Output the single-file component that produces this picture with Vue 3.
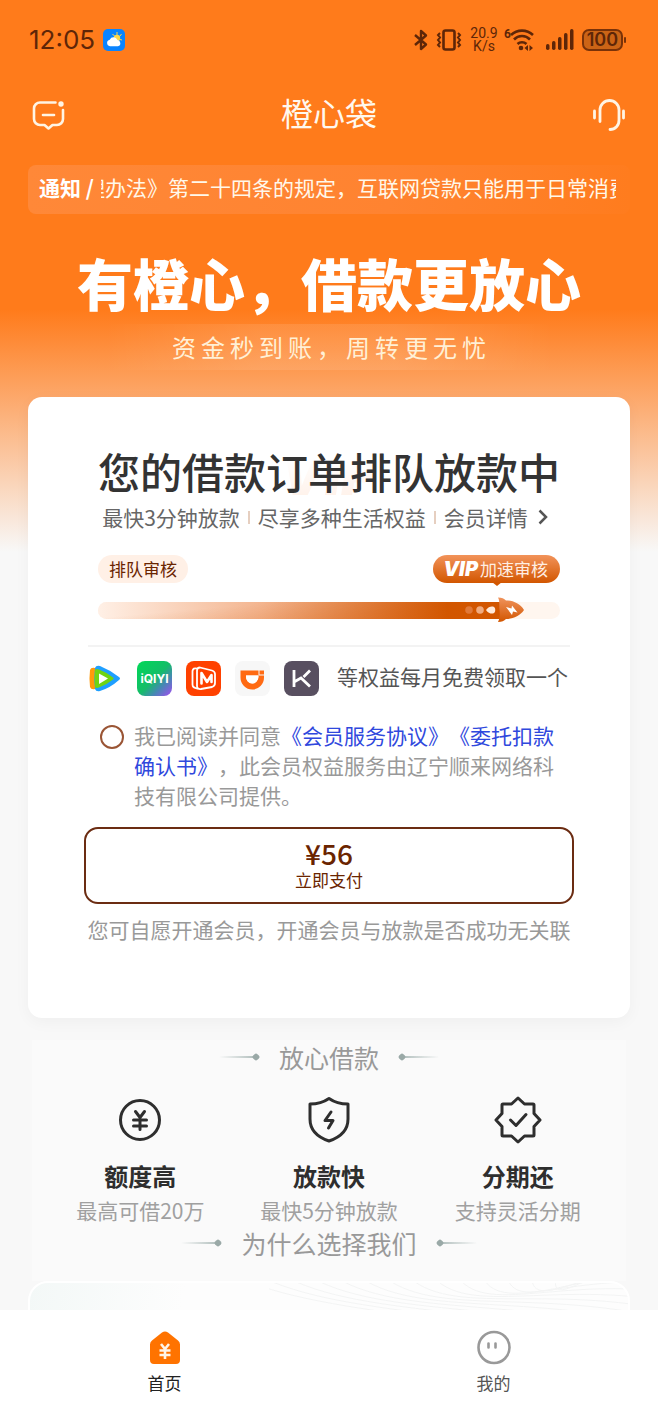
<script setup>
import { ref } from 'vue'

const agreed = ref(false)

const features = [
  { icon: 'yen', title: '额度高', text: '最高可借20万' },
  { icon: 'shield', title: '放款快', text: '最快5分钟放款' },
  { icon: 'badge', title: '分期还', text: '支持灵活分期' }
]

const bars = [6, 9, 13, 17, 21]
const waves = Array.from({ length: 14 }, (_, i) => i * 9)
</script>

<template>
  <div class="page">
    <main class="scroll">
      <div class="status">
        <div class="status-group">
          <span class="clock">12:05</span>
          <svg class="weather" width="22" height="22" viewBox="0 0 22 22" aria-hidden="true">
            <rect width="22" height="22" rx="5" fill="#0a84ff" />
            <path d="M14 3v3M18.500 5l-1.500 2M9.500 5l2 2M17 10.500l2 .5" stroke="#ffd94a" stroke-width="1" />
            <circle cx="14" cy="9" r="3.200" fill="#ffd94a" />
            <path d="M7 17.200a3.300 3.300 0 0 1-.3-6.500 4.200 4.200 0 0 1 7.700 .4 3.100 3.100 0 0 1 .6 6.100z" fill="#fff" />
          </svg>
        </div>
        <div class="status-group">
          <svg width="14" height="22" viewBox="0 0 14 22" fill="none" stroke="#5e2608" stroke-width="2.400" stroke-linejoin="round" aria-hidden="true">
            <path d="M1 6l11 9.500-5 4.500V2l5 4.500L1 16" />
          </svg>
          <svg width="26" height="22" viewBox="0 0 26 22" fill="none" stroke="#5e2608" aria-hidden="true">
            <rect x="7.500" y="1.500" width="11" height="19" rx="2" stroke-width="2.600" />
            <path d="M4 4L2 6l2 2.500-2 2.500 2 2.500L2 16l2 2M22 4l2 2-2 2.500 2 2.500-2 2.500 2 2.500-2 2" stroke-width="2" />
          </svg>
          <span class="speed">20.9<br />K/s</span>
          <svg class="wifi" width="31" height="24" viewBox="0 0 31 24" aria-hidden="true">
            <text x="0" y="10" class="wifi-num">6</text>
            <g fill="none" stroke="#5e2608" stroke-width="2.600">
              <path d="M7 7a16 16 0 0 1 22 0" />
              <path d="M10 11.500a11 11 0 0 1 16 0" />
              <path d="M13.500 16a6.500 6.500 0 0 1 9 0" />
            </g>
            <circle cx="17" cy="20" r="2.300" fill="#5e2608" />
            <path d="M24 17v6l-3.500-3zM25.500 17v6l3.500-3z" fill="#5e2608" />
          </svg>
          <svg class="signal" width="28" height="22" viewBox="0 0 28 22" aria-hidden="true">
            <rect v-for="(h, i) in bars" :key="h" :x="i * 6" :y="21 - h" width="3.500" :height="h" rx="1.700" fill="#5e2608" />
          </svg>
          <span class="battery">100</span>
        </div>
      </div>

      <header class="nav">
        <button class="icon-btn" type="button" aria-label="消息">
          <svg width="34" height="32" viewBox="0 0 34 32" fill="none" stroke="#fff4e4" stroke-width="2.600" stroke-linecap="round" stroke-linejoin="round">
            <path d="M23.500 3.500H8a6 6 0 0 0-6 6v10.500a6 6 0 0 0 6 6h4.500l4 3.500 4-3.500H25a6 6 0 0 0 6-6V11" />
            <path d="M11 16h11" />
            <circle cx="29" cy="5" r="1.700" fill="#fff4e4" stroke-width="2" />
          </svg>
        </button>
        <h1 class="nav-title">橙心袋</h1>
        <button class="icon-btn" type="button" aria-label="客服">
          <svg width="34" height="34" viewBox="0 0 34 34" fill="none" stroke="#fff4e4" stroke-width="2.800" stroke-linecap="round">
            <path d="M8 23.500V12a9.500 9.500 0 0 1 19 0v10a9 9 0 0 1-9 9.500" />
            <path d="M2.500 13v7M31.500 13v7" />
          </svg>
        </button>
      </header>

      <div class="notice">
        <strong class="notice-label">通知 /</strong>
        <div class="notice-view">
          <span class="notice-text">理办法》第二十四条的规定，互联网贷款只能用于日常消费</span>
        </div>
      </div>

      <h2 class="slogan">有橙心，借款更放心</h2>
      <p class="tagline">资金秒到账，周转更无忧</p>

      <section class="card">
        <div class="card-head">
          <span class="watermark" aria-hidden="true">VIP</span>
          <h2 class="card-title">您的借款订单排队放款中</h2>
        </div>
        <div class="perks">
          <span>最快3分钟放款</span>
          <i class="bar"></i>
          <span>尽享多种生活权益</span>
          <i class="bar"></i>
          <a class="detail" href="#member">会员详情
            <svg width="10" height="16" viewBox="0 0 10 16" fill="none" stroke="#555" stroke-width="2.500"><path d="M1.500 1.500L8 8l-6.500 6.500" /></svg>
          </a>
        </div>

        <div class="queue">
          <div class="queue-labels">
            <span class="tag">排队审核</span>
            <span class="vip-tag"><b class="vip">VIP</b>加速审核</span>
          </div>
          <div class="track">
            <div class="fill"></div>
            <svg class="rocket" width="60" height="26" viewBox="0 0 60 26" aria-hidden="true">
              <defs>
                <linearGradient id="rocketBody" x1="0" y1="0" x2="0" y2="1">
                  <stop offset="0" stop-color="#f0935c" />
                  <stop offset="1" stop-color="#d25600" />
                </linearGradient>
              </defs>
              <circle cx="4" cy="13" r="3.800" fill="#e0793a" />
              <circle cx="15" cy="13" r="3.800" fill="#f0ab80" />
              <path d="M21 13c2-3 5-4 7-3.500 3 .8 3 6.200 0 7-2 .5-5-.5-7-3.500z" fill="#ffeadb" />
              <path d="M33 .5c4 0 6 1 8 3 7 0 14 3 18 9.500-4 6-11 9-18 9-2 2-4 3-8 3 2-4 2-8 1.500-12S35 4 33 .5z" fill="url(#rocketBody)" />
              <path d="M41 10l5.500 1.500.5-3 5.500 7-4.500-1-1 3.500z" fill="#fff" />
            </svg>
          </div>
        </div>

        <div class="benefits">
          <svg class="app" viewBox="0 0 35 35" aria-label="腾讯视频" role="img">
            <path d="M2 9q1-3 5-2l3 2v17l-3 2q-4 1-5-2-1-8.500 0-17z" fill="#ff9a0a" />
            <path d="M7 7q1-3 5-2 10 4 19 11 2 1.500 0 3-9 8-19 11-4 1-5-2-1.500-10 0-21z" fill="#1f9fff" />
            <path d="M7 9q1-1.500 4-.5 8 3 14 8 1.500 1 0 2-6 5-14 8-3 1-4-.5-1-8.500 0-17z" fill="#6fd413" />
            <path d="M11 12.500l9 5-9 5.500z" fill="#fff" />
          </svg>
          <svg class="app" viewBox="0 0 35 35" aria-label="爱奇艺" role="img">
            <defs>
              <linearGradient id="qiyi" x1="0" y1="0" x2="1" y2="1">
                <stop offset="0" stop-color="#00d957" />
                <stop offset=".5" stop-color="#14bd68" />
                <stop offset=".72" stop-color="#4787b5" />
                <stop offset="1" stop-color="#a34bf2" />
              </linearGradient>
            </defs>
            <rect width="35" height="35" rx="8" fill="url(#qiyi)" />
            <text x="17.500" y="22" text-anchor="middle" class="qiyi-text">iQIYI</text>
          </svg>
          <svg class="app" viewBox="0 0 35 35" aria-label="芒果TV" role="img">
            <rect width="35" height="35" rx="8" fill="#ff4100" />
            <g fill="none" stroke="#fff" stroke-linejoin="round" stroke-linecap="round">
              <path d="M11 7.500Q7 6.500 6.500 10v13.500q0 3.500 5 4" stroke-width="1.800" />
              <path d="M14 6.500l12 3q3 1 3 3.500v9q0 3-3 4l-11 2q-4 .5-4-3V9.500q0-3 3-3z" stroke-width="1.800" />
              <path d="M15.500 22.500V12l5.500 9 4.500-7v7" stroke-width="2.600" />
            </g>
          </svg>
          <svg class="app" viewBox="0 0 35 35" aria-label="滴滴出行" role="img">
            <rect width="35" height="35" rx="8" fill="#f7f7f7" />
            <path d="M5.500 9.500h18v5H11V16a6.200 6.500 0 0 0 12.400 0v-1.500H29v2a11.700 12 0 0 1-23.500 0z" fill="#ff6a13" />
            <path d="M24.500 9.500H29v4h-4.500z" fill="#ff6a13" />
            <path d="M11 14.500h12.400V16a6.200 6.500 0 0 1-12.400 0z" fill="#fff" />
          </svg>
          <svg class="app" viewBox="0 0 35 35" aria-label="Keep" role="img">
            <rect width="35" height="35" rx="8" fill="#584f60" />
            <path d="M10 9v17M26 9.500L19.500 16M10 21l7-4 9 8.500" fill="none" stroke="#fff" stroke-width="2.800" />
          </svg>
          <span class="benefits-text">等权益每月免费领取一个</span>
        </div>

        <div class="agree">
          <input id="agree" v-model="agreed" class="agree-box" type="checkbox" />
          <p class="agree-text"><label for="agree">我已阅读并同意</label><a href="#service">《会员服务协议》</a><a href="#debit">《委托扣款确认书》</a>，此会员权益服务由辽宁顺来网络科技有限公司提供。</p>
        </div>

        <button class="pay" type="button">
          <span class="price">¥56</span>
          <span class="pay-text">立即支付</span>
        </button>
        <p class="note">您可自愿开通会员，开通会员与放款是否成功无关联</p>
      </section>

      <section class="why">
        <h3 class="heading"><i class="deco"></i>放心借款<i class="deco flip"></i></h3>
        <ul class="features">
          <li v-for="f in features" :key="f.title" class="feature">
            <svg width="48" height="48" viewBox="0 0 48 48" fill="none" stroke="#2e2e2e" stroke-width="3" stroke-linecap="round" stroke-linejoin="round" aria-hidden="true">
              <g v-if="f.icon === 'yen'">
                <circle cx="24" cy="24" r="19.500" />
                <path d="M19.500 15.500l4.500 6 4.500-6M24 21.500v12M17.500 24h13M17.500 30h13" />
              </g>
              <g v-else-if="f.icon === 'shield'">
                <path d="M24 2.500c5 3.500 11 5.500 19 5.500v15c0 11-7 18-19 22C12 41 5 34 5 23V8c8 0 14-2 19-5.500z" />
                <path d="M26 16l-6 8.500h8L23.500 32" />
              </g>
              <g v-else>
                <path d="M24 2l6.500 6H39q1 0 1 1v8.500l6 6.500-6 6.500V39q0 1-1 1h-8.500L24 46l-6.500-6H9q-1 0-1-1v-8.500L2 24l6-6.500V9q0-1 1-1h8.500z" />
                <path d="M16.500 24l5.500 5.500 10-11" />
              </g>
            </svg>
            <strong class="feature-title">{{ f.title }}</strong>
            <span class="feature-text">{{ f.text }}</span>
          </li>
        </ul>
        <h3 class="heading"><i class="deco"></i>为什么选择我们<i class="deco flip"></i></h3>
      </section>

      <section class="promo">
        <svg class="promo-lines" viewBox="0 0 360 120" fill="none" stroke="#f3f4f4" stroke-width="1" aria-hidden="true">
          <path v-for="w in waves" :key="w" :d="`M${w * 3 - 60} -20C${w * 2 + 40} 40 ${w + 200} ${20 - w / 3} 400 ${90 - w}`" />
        </svg>
      </section>
    </main>

    <nav class="tabs">
      <a class="tab active" href="#home">
        <svg width="34" height="36" viewBox="0 0 34 36" aria-hidden="true">
          <path d="M14 2.500q3-2 6 0l10 8q2 1.500 2 4V30q0 4-4 4H6q-4 0-4-4V14.500q0-2.500 2-4z" fill="#ff7300" />
          <path d="M13 14l4 5 4-5M17 19v10M11.500 20.500h11M11.500 25h11" fill="none" stroke="#fff5e8" stroke-width="2.600" />
        </svg>
        <span>首页</span>
      </a>
      <a class="tab" href="#mine">
        <svg width="34" height="36" viewBox="0 0 34 36" fill="none" stroke="#999" aria-hidden="true">
          <circle cx="17" cy="17.500" r="15.500" stroke-width="2.600" />
          <path d="M11.500 13.500v4M18.500 13.500v4" stroke-width="2.600" stroke-linecap="round" />
        </svg>
        <span>我的</span>
      </a>
    </nav>
  </div>
</template>

<style>
html,
body {
  margin: 0;
  background: #f8f8f8;
}
</style>

<style scoped>
.page {
  height: 100vh;
  display: flex;
  flex-direction: column;
  font-family: "Noto Sans CJK SC", "Noto Sans", sans-serif;
  font-size: 21px;
  line-height: 30px;
  text-spacing-trim: space-all;
  color: #333;
}

h1,
h2,
h3,
p,
ul {
  margin: 0;
  padding: 0;
  font-weight: 400;
}

a {
  text-decoration: none;
}

button {
  font-family: inherit;
  cursor: pointer;
}

.scroll {
  flex: 1;
  min-height: 0;
  overflow-y: auto;
  scrollbar-width: none;
  background: linear-gradient(#ff7b1b 0, #ff7b1b 310px, #f8f8f8 552px);
}

.status {
  height: 80px;
  padding: 0 35px 0 29px;
  display: flex;
  align-items: center;
  justify-content: space-between;
  color: #5e2608;
}

.status-group {
  display: flex;
  align-items: center;
  gap: 8px;
}

.clock {
  font-family: Inter, sans-serif;
  font-size: 26px;
}

.speed {
  font-family: Roboto, sans-serif;
  font-size: 14px;
  line-height: 13px;
  text-align: center;
}

.wifi {
  margin-left: -2px;
}

.wifi-num {
  font: 700 12px Roboto, sans-serif;
  fill: #5e2608;
}

.signal {
  margin-left: 3px;
}

.battery {
  position: relative;
  box-sizing: border-box;
  height: 22px;
  padding: 0 3px;
  border: 2px solid #7a3208;
  border-radius: 7px;
  background: #cc6416;
  font: 600 18px/18px Inter, sans-serif;
}

.battery::after {
  content: "";
  position: absolute;
  left: 100%;
  top: 6px;
  margin-left: 3px;
  width: 2px;
  height: 6px;
  border-radius: 1px;
  background: #7a3208;
}

.nav {
  height: 70px;
  padding: 0 32px;
  display: flex;
  align-items: center;
  justify-content: space-between;
}

.icon-btn {
  display: flex;
  padding: 0;
  border: 0;
  background: none;
}

.nav-title {
  padding-bottom: 6px;
  font-size: 32px;
  line-height: 40px;
  color: #fff8ee;
}

.notice {
  box-sizing: border-box;
  margin: 15px 28px 0;
  height: 49px;
  padding: 0 14px 5px 11px;
  display: flex;
  align-items: center;
  gap: 7px;
  border-radius: 8px;
  background: linear-gradient(90deg, #ff8838, #ff8330 60%, #ff7c1e);
  color: #fff8ea;
}

.notice-label {
  flex: none;
  font-weight: 700;
  color: #fff;
}

.notice-view {
  flex: 1;
  min-width: 0;
  overflow: hidden;
  white-space: nowrap;
}

.notice-text {
  display: block;
  margin-left: -17px;
}

.slogan {
  margin-top: 34px;
  font-size: 56px;
  line-height: 68px;
  font-weight: 900;
  text-align: center;
  color: #fff;
}

.tagline {
  width: 68%;
  margin: 8px auto 0;
  font-size: 24px;
  line-height: 46px;
  letter-spacing: 5px;
  text-indent: 5px;
  text-align: center;
  color: #fff0d6;
  background: linear-gradient(90deg, transparent, rgba(255, 255, 255, 0.1) 35%, rgba(255, 255, 255, 0.1) 65%, transparent);
}

.card {
  isolation: isolate;
  margin: 27px 28px 0;
  padding: 46px 56px 74px;
  border-radius: 14px;
  background: #fff;
  box-shadow: 0 4px 16px rgba(0, 0, 0, 0.04);
}

.card-head {
  position: relative;
  display: flex;
  justify-content: center;
}

.card-title {
  font-size: 42px;
  line-height: 56px;
  font-weight: 500;
  white-space: nowrap;
}

.watermark {
  position: absolute;
  z-index: -1;
  top: 4px;
  padding: 0 8px;
  font: italic 900 56px/56px Inter, sans-serif;
  color: transparent;
  background: linear-gradient(#fff 20%, #fff0e7);
  background-clip: text;
}

.perks {
  margin-top: 3px;
  padding-right: 8px;
  display: flex;
  align-items: center;
  justify-content: center;
  gap: 8px;
  color: #666;
  white-space: nowrap;
}

.bar {
  width: 2px;
  height: 13px;
  background: #e6cfc0;
}

.detail {
  display: flex;
  align-items: center;
  gap: 10px;
  color: #666;
}

.queue {
  margin: 23px 14px 0;
}

.queue-labels {
  display: flex;
  align-items: center;
  justify-content: space-between;
  font-size: 17px;
  line-height: 28px;
}

.tag {
  padding: 0 11px;
  border-radius: 14px;
  background: #fff0e6;
  color: #6a2400;
}

.vip-tag {
  position: relative;
  display: flex;
  gap: 2px;
  padding: 0 12px 0 10px;
  border-radius: 14px;
  background: linear-gradient(#f2935a, #d25600);
  color: #ffeee2;
}

.vip-tag::after {
  content: "";
  position: absolute;
  left: 50%;
  top: 100%;
  margin: -1px 0 0 -5px;
  border: 5px solid transparent;
  border-top: 4px solid #d25600;
  border-bottom: 0;
}

.vip {
  font-family: Inter, sans-serif;
  font-size: 20px;
  font-weight: 900;
  font-style: italic;
  color: #fff;
}

.track {
  position: relative;
  margin-top: 19px;
  height: 17px;
  border-radius: 9px;
  background: #fff6ef;
}

.fill {
  width: 89%;
  height: 17px;
  border-radius: 9px;
  background: linear-gradient(175deg, transparent 30%, rgba(210, 86, 0, 0.35)), linear-gradient(90deg, #fff0e6, #f3b48e 40%, #d25600 85%);
}

.rocket {
  position: absolute;
  left: 92.5%;
  top: -5px;
  margin-left: -60px;
}

.benefits {
  margin: 26px 4px 0;
  padding-top: 14px;
  border-top: 2px solid #f3f3f3;
  display: flex;
  align-items: center;
  gap: 14px;
  color: #555;
  white-space: nowrap;
}

.app {
  flex: none;
  width: 35px;
  height: 35px;
}

.qiyi-text {
  font: 700 12px Inter, sans-serif;
  fill: #fff;
}

.benefits-text {
  margin-left: 4px;
  padding-bottom: 5px;
}

.agree {
  margin: 24px 16px 0;
  display: flex;
  gap: 10px;
  color: #999;
}

.agree-box {
  flex: none;
  appearance: none;
  box-sizing: border-box;
  width: 24px;
  height: 24px;
  margin: 5px 0 0;
  border: 2px solid #9a5535;
  border-radius: 50%;
}

.agree-box:checked {
  background: #9a5535;
}

.agree-text {
  flex: 1;
}

.agree-text a {
  color: #2f48dd;
}

.pay {
  width: 100%;
  margin-top: 17px;
  padding: 9px 0 11px;
  display: flex;
  flex-direction: column;
  align-items: center;
  border: 2px solid #6b2c12;
  border-radius: 14px;
  background: #fff;
  color: #6a2400;
}

.price {
  font-size: 28px;
  line-height: 31px;
  font-weight: 500;
}

.pay-text {
  font-size: 17px;
  line-height: 22px;
}

.note {
  margin-top: 10px;
  color: #999;
  text-align: center;
  white-space: nowrap;
}

.why {
  margin: 22px 32px 0;
  padding-bottom: 21px;
  background: #fafafa;
}

.heading {
  display: flex;
  align-items: center;
  justify-content: center;
  gap: 20px;
  font-size: 25px;
  line-height: 34px;
  color: #999;
}

.deco {
  position: relative;
  width: 40px;
  height: 2px;
  background: linear-gradient(90deg, transparent, #a9b8b6);
}

.deco::after {
  content: "";
  position: absolute;
  right: 0;
  top: -2px;
  width: 6px;
  height: 6px;
  border-radius: 2px;
  background: #9aa9a7;
  transform: rotate(45deg);
}

.flip {
  transform: scaleX(-1);
}

.features {
  margin: 22px 14px 0;
  display: grid;
  grid-template-columns: repeat(3, 1fr);
  list-style: none;
}

.feature {
  display: flex;
  flex-direction: column;
  align-items: center;
}

.feature-title {
  margin-top: 14px;
  font-size: 24px;
  line-height: 36px;
  font-weight: 700;
  color: #2e2e2e;
}

.feature-text {
  line-height: 32px;
  color: #a0a0a0;
  white-space: nowrap;
}

.promo {
  margin: 0 28px;
  height: 160px;
  display: flex;
  justify-content: flex-end;
  border: 2px solid #fff;
  border-radius: 20px;
  overflow: hidden;
  background: linear-gradient(100deg, #f3f8f7, #fdfdfd 25%);
}

.promo-lines {
  width: 60%;
  height: 120px;
}

.tabs {
  display: flex;
  height: 106px;
  background: #fff;
}

.tab {
  flex: 1;
  padding-top: 20px;
  display: flex;
  flex-direction: column;
  align-items: center;
  gap: 5px;
  font-size: 17px;
  line-height: 24px;
  color: #555;
}

.active {
  color: #222;
}
</style>
